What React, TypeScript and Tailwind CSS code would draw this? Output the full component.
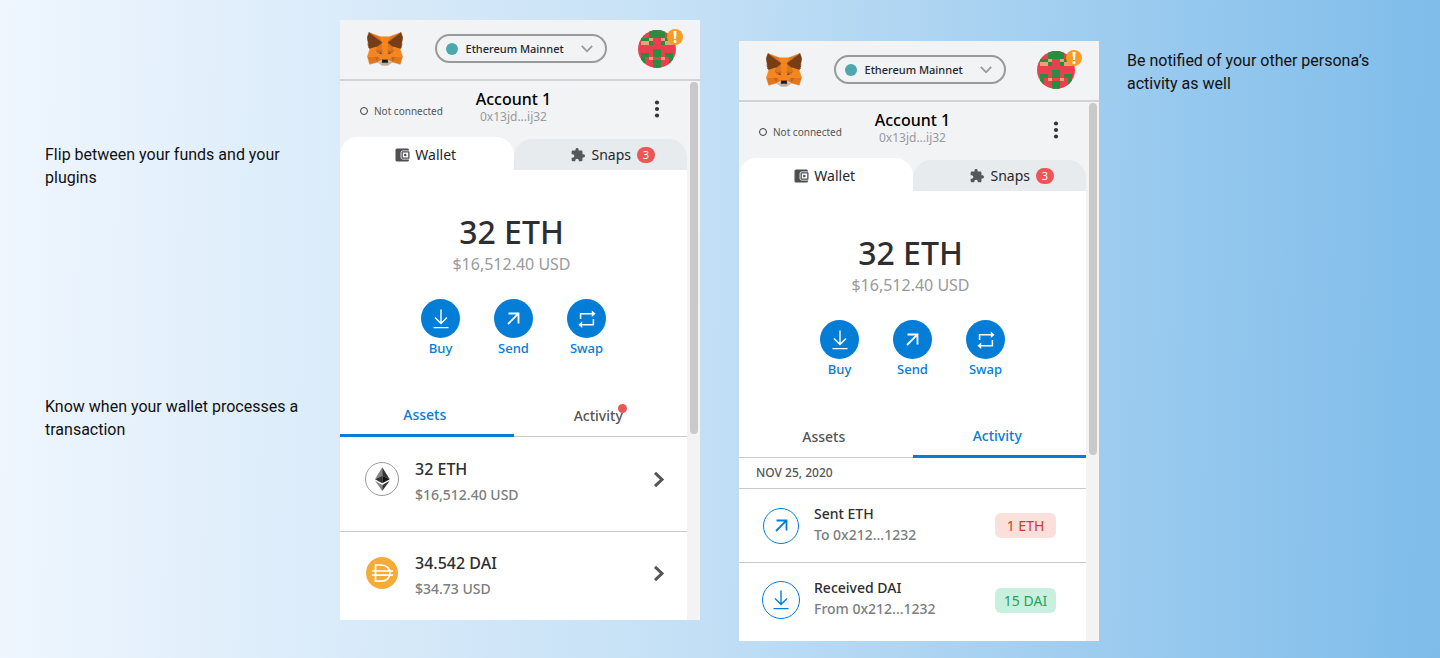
import { useState } from "react";
import type { ReactNode } from "react";

type Tab = "assets" | "activity";

const FOX: [string, string[]][] = [
  ["#E2761B", ["274.1,35.5 174.6,109.4 193,65.8", "44.4,35.5 143.1,110.1 125.6,65.8", "238.3,206.8 211.8,247.4 268.5,263 284.8,207.7", "33.9,207.7 50.1,263 106.8,247.4 80.3,206.8", "103.6,138.2 87.8,162.1 144.1,164.6 142.1,104.1", "214.9,138.2 175.9,103.4 174.6,164.6 230.8,162.1", "106.8,247.4 140.6,230.9 111.4,208.1", "177.9,230.9 211.8,247.4 207.1,208.1"]],
  ["#D7C1B3", ["211.8,247.4 177.9,230.9 180.6,253 180.3,262.3", "106.8,247.4 138.3,262.3 138.1,253 140.6,230.9"]],
  ["#233447", ["138.8,193.5 110.6,185.2 130.5,176.1", "179.7,193.5 188,176.1 208,185.2"]],
  ["#CD6116", ["106.8,247.4 111.6,206.8 80.3,207.7", "207,206.8 211.8,247.4 238.3,207.7", "230.8,162.1 174.6,164.6 179.8,193.5 188.1,176.1 208.1,185.2", "110.6,185.2 130.6,176.1 138.8,193.5 144.1,164.6 87.8,162.1"]],
  ["#E4751F", ["87.8,162.1 111.4,208.1 110.6,185.2", "208.1,185.2 207.1,208.1 230.8,162.1", "144.1,164.6 138.8,193.5 145.4,227.6 146.9,182.7", "174.6,164.6 171.9,182.6 173.1,227.6 179.8,193.5"]],
  ["#F6851B", ["179.8,193.5 173.1,227.6 177.9,230.9 207.1,208.1 208.1,185.2", "110.6,185.2 111.4,208.1 140.6,230.9 145.4,227.6 138.8,193.5"]],
  ["#C0AD9E", ["180.3,262.3 180.6,253 178.1,250.8 140.4,250.8 138.1,253 138.3,262.3 106.8,247.4 117.8,256.4 140.1,271.9 178.4,271.9 200.8,256.4 211.8,247.4"]],
  ["#161616", ["177.9,230.9 173.1,227.6 145.4,227.6 140.6,230.9 138.1,253 140.4,250.8 178.1,250.8 180.6,253"]],
  ["#763D16", ["278.3,114.2 286.8,73.4 274.1,35.5 177.9,106.9 214.9,138.2 267.2,153.5 278.8,140 273.8,136.4 281.8,129.1 275.6,124.3 283.6,118.2", "31.8,73.4 40.3,114.2 34.9,118.2 42.9,124.3 36.8,129.1 44.8,136.4 39.8,140 51.3,153.5 103.6,138.2 140.6,106.9 44.4,35.5"]],
  ["#F6851B", ["267.2,153.5 214.9,138.2 230.8,162.1 207.1,208.1 238.3,207.7 284.8,207.7", "103.6,138.2 51.3,153.5 33.9,207.7 80.3,207.7 111.4,208.1 87.8,162.1", "174.6,164.6 177.9,106.9 193.1,65.8 125.6,65.8 140.6,106.9 144.1,164.6 145.3,182.8 145.4,227.6 173.1,227.6 173.3,182.8"]],
];

function FoxLogo() {
  return (
    <svg viewBox="31 35 257 238" className="h-[34px] w-9" role="img" aria-label="Fox logo">
      {FOX.map(([fill, shapes]) =>
        shapes.map((points) => <polygon key={points} points={points} fill={fill} stroke={fill} strokeWidth="3" />)
      )}
    </svg>
  );
}

// column, row, width, colour; mirrored around the centre
const CELLS: [number, number, number, "g" | "t"][] = [
  [3, 0, 2, "g"], [3, 1, 2, "g"], [2, 2, 1, "g"], [3, 2, 1, "t"], [1, 3, 2, "t"], [3, 3, 1, "g"],
  [1, 2, 1, "g"], [4, 5, 1, "g"], [4, 6, 1, "g"], [1, 6, 2, "g"], [1, 7, 1, "g"], [3, 7, 1, "t"],
  [1, 8, 1, "g"], [4, 8, 1, "g"], [4, 9, 1, "g"],
];

function Identicon({ id }: { id: string }) {
  return (
    <svg viewBox="0 0 38 38" className="size-[38px]" role="img" aria-label="Account avatar">
      <clipPath id={id}>
        <circle cx="19" cy="19" r="19" />
      </clipPath>
      <g clipPath={`url(#${id})`} shapeRendering="crispEdges">
        <rect width="38" height="38" fill="#ea3f4e" />
        {CELLS.map(([c, r, w, k]) => {
          const fill = k === "g" ? "#2a8c3e" : "#e3a572";
          const x = 4 * c - 1;
          return (
            <g key={`${c}-${r}`} fill={fill}>
              <rect x={x} y={3.8 * r} width={4 * w} height="3.8" />
              <rect x={38 - x - 4 * w} y={3.8 * r} width={4 * w} height="3.8" />
            </g>
          );
        })}
      </g>
    </svg>
  );
}

function DownloadIcon({ className }: { className: string }) {
  return (
    <svg viewBox="0 0 16 20" className={className} fill="none" stroke="currentColor" strokeWidth="1.4" aria-hidden="true">
      <path d="M8 0.5V14.5M2 8.5L8 14.5L14 8.5M0.5 18.6H15.5" />
    </svg>
  );
}

function SendIcon({ className }: { className: string }) {
  return (
    <svg viewBox="0 0 13 13" className={className} fill="none" stroke="currentColor" strokeWidth="1.8" aria-hidden="true">
      <path d="M1.5 1.5H11.5V11.5M11.3 1.7L1 12" />
    </svg>
  );
}

function SwapIcon() {
  return (
    <svg viewBox="0 0 18 18" className="size-[18px]" fill="none" stroke="currentColor" strokeWidth="1.5" aria-hidden="true">
      <path d="M2.6 9V3.8H14.5M15.4 9V14.7H3.5" />
      <path d="M13.8 0.6L17.6 3.8L13.8 7ZM4.2 11.5L0.4 14.7L4.2 17.9Z" fill="currentColor" stroke="none" />
    </svg>
  );
}

function WalletIcon() {
  return (
    <svg viewBox="0 0 15 14" className="h-[14px] w-[15px]" aria-hidden="true">
      <path d="M2 0.5H12.5A1.5 1.5 0 0 1 14 2V2.4H7.6A2 2 0 0 0 5.6 4.4V9.6A2 2 0 0 0 7.6 11.6H14V12A1.5 1.5 0 0 1 12.5 13.5H2A1.5 1.5 0 0 1 0.5 12V2A1.5 1.5 0 0 1 2 0.5Z" fill="#4d4f52" />
      <rect x="6.5" y="3.2" width="8" height="7.6" rx="0.9" fill="#4d4f52" />
      <rect x="7.8" y="4.5" width="5.4" height="5" fill="#fff" />
      <circle cx="10.3" cy="7" r="1.3" fill="#4d4f52" />
    </svg>
  );
}

function PuzzleIcon() {
  return (
    <svg viewBox="1 1 22 22" className="size-[14px]" fill="#55585b" aria-hidden="true">
      <path d="M20.5 11H19V7c0-1.1-.9-2-2-2h-4V3.5C13 2.12 11.88 1 10.5 1S8 2.12 8 3.5V5H4c-1.1 0-1.99.9-1.99 2v3.8H3.5c1.49 0 2.7 1.21 2.7 2.7s-1.21 2.7-2.7 2.7H2V20c0 1.1.9 2 2 2h3.8v-1.5c0-1.49 1.21-2.7 2.7-2.7 1.49 0 2.7 1.21 2.7 2.7V22H17c1.1 0 2-.9 2-2v-4h1.5c1.38 0 2.5-1.12 2.5-2.5S21.88 11 20.5 11z" />
    </svg>
  );
}

function EthIcon() {
  return (
    <svg viewBox="0 0 34 34" className="size-[34px]" aria-hidden="true">
      <circle cx="17" cy="17" r="16.5" fill="#fff" stroke="#9a9a9a" />
      <path d="M17.3 5.3V13.7L10 17.2Z" fill="#828384" />
      <path d="M17.3 5.3V13.7L24.7 17.2Z" fill="#343434" />
      <path d="M17.3 13.7V21.3L10 17.2Z" fill="#343434" />
      <path d="M17.3 13.7V21.3L24.7 17.2Z" fill="#131313" />
      <path d="M10 18.7L17.3 22.9V29Z" fill="#828384" />
      <path d="M24.7 18.7L17.3 22.9V29Z" fill="#343434" />
    </svg>
  );
}

function DaiIcon() {
  return (
    <svg viewBox="0 0 32 32" className="size-8" aria-hidden="true">
      <circle cx="16" cy="16" r="16" fill="#f5ac37" />
      <path d="M9.5 8H15.5C20.5 8 24 11.5 24 16S20.5 24.2 15.5 24.2H9.5ZM6 14H27M6 18.2H27" fill="none" stroke="#fff" strokeWidth="1.7" />
    </svg>
  );
}

function ChevronRight() {
  return (
    <svg viewBox="0 0 12 17" className="h-[17px] w-3" fill="none" stroke="#535557" strokeWidth="3" aria-hidden="true">
      <path d="M2 1.8L9 8.5L2 15.2" />
    </svg>
  );
}

function Header({ id }: { id: string }) {
  return (
    <header className="flex h-[61px] items-center justify-between border-b-2 border-[#d2d3d4] bg-[#f2f3f5] pr-4 pb-[2px] pl-[27px]">
      <FoxLogo />
      <button type="button" className="flex h-[29px] w-[172px] items-center rounded-full border-2 border-[#989a9b] pr-3 pl-[9px]">
        <span className="size-3 rounded-full bg-[#4ca8ac]" />
        <span className="ml-2 text-[11px] font-medium text-[#24272a]">Ethereum Mainnet</span>
        <svg viewBox="0 0 12 8" className="ml-auto h-2 w-3" fill="none" stroke="#989a9b" strokeWidth="1.8" aria-hidden="true">
          <path d="M0.8 0.8L6 6.3L11.2 0.8" />
        </svg>
      </button>
      <button type="button" aria-label="Account menu" className="relative mr-2 rounded-full">
        <Identicon id={id} />
        <span className="absolute -top-px -right-[7px]">
          <svg viewBox="0 0 16 16" className="size-4" aria-hidden="true">
            <circle cx="8" cy="8" r="8" fill="#f99c24" />
            <path d="M6.5 2H9.5L9 10H7Z" fill="#fff" />
            <circle cx="8" cy="12.4" r="1.5" fill="#fff" />
          </svg>
        </span>
      </button>
    </header>
  );
}

function AccountBar() {
  return (
    <div className="grid h-14 grid-cols-3 items-center bg-[#f2f3f5] px-5">
      <div className="flex items-center gap-[6px] pt-1 text-[10px] whitespace-nowrap text-[#535557]">
        <span className="size-2 rounded-full border border-[#3b3d40]" />
        Not connected
      </div>
      <div className="flex flex-col items-center pb-1">
        <h2 className="text-[16px] leading-5 font-medium whitespace-nowrap text-black">Account 1</h2>
        <span className="text-[12px] leading-4 text-[#989a9b]">0x13jd...ij32</span>
      </div>
      <button type="button" aria-label="Account options" className="justify-self-end px-[6px]">
        <svg viewBox="0 0 8 18" className="h-[18px] w-2" fill="#333537" aria-hidden="true">
          <circle cx="4" cy="2.5" r="2.1" />
          <circle cx="4" cy="9" r="2.1" />
          <circle cx="4" cy="15.5" r="2.1" />
        </svg>
      </button>
    </div>
  );
}

function ModeTabs() {
  return (
    <div className="flex items-end bg-[#f2f3f5]">
      <button type="button" className="flex h-[33px] w-1/2 items-center justify-center gap-[5px] rounded-t-[18px] bg-white pt-[2px] pr-[2px] text-[14px] text-[#24272a]">
        <WalletIcon />
        Wallet
      </button>
      <button type="button" className="flex h-[31px] w-1/2 items-center justify-end gap-[6px] rounded-t-[18px] bg-[#e8ebee] pr-8 text-[14px] text-[#24272a]">
        <PuzzleIcon />
        Snaps
        <span className="flex h-4 w-[18px] items-center justify-center rounded-full bg-[#eb5757] text-[11px] text-white">3</span>
      </button>
    </div>
  );
}

function Action({ label, children }: { label: string; children: ReactNode }) {
  return (
    <button type="button" className="flex w-[39px] flex-col items-center text-[13px] font-medium text-[#037dd6]">
      <span className="flex size-[39px] items-center justify-center rounded-full bg-[#037dd6] text-white">{children}</span>
      <span className="leading-5">{label}</span>
    </button>
  );
}

function Balance() {
  return (
    <section className="flex flex-col items-center pt-10">
      <div className="pr-1 text-center">
        <p className="text-[32px] leading-[44px] font-medium text-[#2c2e31]">32 ETH</p>
        <p className="text-[16px] leading-5 text-[#989a9b]">$16,512.40 USD</p>
      </div>
      <div className="mt-[25px] flex gap-[34px]">
        <Action label="Buy"><DownloadIcon className="h-5 w-4" /></Action>
        <Action label="Send"><SendIcon className="size-[13px]" /></Action>
        <Action label="Swap"><SwapIcon /></Action>
      </div>
    </section>
  );
}

function ListTabs({ active, unread, onSelect }: { active: Tab; unread: boolean; onSelect: (t: Tab) => void }) {
  const base = "flex h-[46px] flex-1 items-center justify-center pt-[3px] pr-1 text-[14px] font-medium";
  const on = "border-b-[3px] border-[#037dd6] text-[#037dd6]";
  const off = "border-b border-[#c9cacc] text-[#535557]";
  return (
    <div role="tablist" className="mt-[33px] flex">
      <button type="button" role="tab" aria-selected={active === "assets"} onClick={() => onSelect("assets")} className={`${base} ${active === "assets" ? on : off}`}>
        Assets
      </button>
      <button type="button" role="tab" aria-selected={active === "activity"} onClick={() => onSelect("activity")} className={`${base} ${active === "activity" ? on : off}`}>
        <span className="relative">
          Activity
          {unread && <span className="absolute top-0 -right-1 size-[9px] rounded-full bg-[#eb5757]" />}
        </span>
      </button>
    </div>
  );
}

function AssetRow({ icon, amount, value }: { icon: ReactNode; amount: string; value: string }) {
  return (
    <li className="border-b border-[#c9cacc] pt-5 pb-6 last:border-b-0 last:pt-[19px] last:pb-[19px]">
      <a href="#asset" className="flex items-start pr-[22px] pl-[25px]">
        <span className="flex h-11 w-[34px] items-center justify-center">{icon}</span>
        <span className="ml-4 flex flex-col font-medium">
          <span className="text-[16px] leading-[25px] text-[#2c2e31]">{amount}</span>
          <span className="text-[14px] leading-[25px] text-[#7b7d80]">{value}</span>
        </span>
        <span className="ml-auto flex h-11 items-center"><ChevronRight /></span>
      </a>
    </li>
  );
}

function ActivityRow({ icon, title, detail, amount, tone }: { icon: ReactNode; title: string; detail: string; amount: string; tone: "out" | "in" }) {
  const colours = tone === "out" ? "bg-[#fbdfdb] text-[#d73a1f]" : "bg-[#c9f0de] text-[#28a05a]";
  return (
    <li className="flex h-[74px] items-center border-b border-[#c9cacc] pr-[30px] pl-[23px] last:border-b-0">
      <span className="flex w-[38px] justify-center text-[#037dd6]">{icon}</span>
      <span className="ml-[14px] flex flex-col pb-1 text-[14px] leading-[21px] font-medium">
        <span className="text-[#2c2e31]">{title}</span>
        <span className="text-[#7b7d80]">{detail}</span>
      </span>
      <span className={`ml-auto flex h-[25px] w-[61px] items-center justify-center rounded-md text-[14px] ${colours}`}>{amount}</span>
    </li>
  );
}

function WalletPanel({ id, initial, unread }: { id: string; initial: Tab; unread: boolean }) {
  const [tab, setTab] = useState<Tab>(initial);
  return (
    <article className="w-[360px] shrink-0 overflow-hidden bg-white font-['Noto_Sans',sans-serif]">
      <Header id={id} />
      <div className="flex">
        <div className="min-w-0 flex-1">
          <AccountBar />
          <ModeTabs />
          <Balance />
          <ListTabs active={tab} unread={unread} onSelect={setTab} />
          {tab === "assets" ? (
            <ul>
              <AssetRow icon={<EthIcon />} amount="32 ETH" value="$16,512.40 USD" />
              <AssetRow icon={<DaiIcon />} amount="34.542 DAI" value="$34.73 USD" />
            </ul>
          ) : (
            <>
              <h3 className="border-b border-[#c9cacc] pl-[17px] text-[12px] leading-[30px] font-medium text-[#535557]">NOV 25, 2020</h3>
              <ul className="pb-1">
                <ActivityRow
                  icon={<span className="flex size-9 items-center justify-center rounded-full border border-current"><SendIcon className="size-[13px]" /></span>}
                  title="Sent ETH" detail="To 0x212...1232" amount="1 ETH" tone="out"
                />
                <ActivityRow
                  icon={<span className="flex size-[38px] items-center justify-center rounded-full border border-current"><DownloadIcon className="h-5 w-4" /></span>}
                  title="Received DAI" detail="From 0x212...1232" amount="15 DAI" tone="in"
                />
              </ul>
            </>
          )}
        </div>
        <div className="w-[13px] bg-[#f3f3f3] pt-px pl-[3px]">
          <div className="h-[352px] w-2 rounded-full bg-[#c9c9c9]" />
        </div>
      </div>
    </article>
  );
}

export default function App() {
  return (
    <main className="flex min-h-screen items-start bg-[linear-gradient(91deg,#eff6fe_0%,#c6e1f6_46%,#7ebcea_100%)] pb-4 font-['Roboto',sans-serif] text-[16px] leading-[23px] text-[#111]">
      <div className="flex w-[340px] shrink-0 flex-col gap-[206px] pt-[143px] pr-[30px] pl-[45px]">
        <p>Flip between your funds and your plugins</p>
        <p>Know when your wallet processes a transaction</p>
      </div>
      <div className="flex shrink-0 items-start gap-[39px] pt-5">
        <WalletPanel id="avatar-main" initial="assets" unread />
        <div className="pt-[21px]">
          <WalletPanel id="avatar-persona" initial="activity" unread={false} />
        </div>
      </div>
      <p className="w-[285px] pt-[49px] pl-7">Be notified of your other persona’s activity as well</p>
    </main>
  );
}
